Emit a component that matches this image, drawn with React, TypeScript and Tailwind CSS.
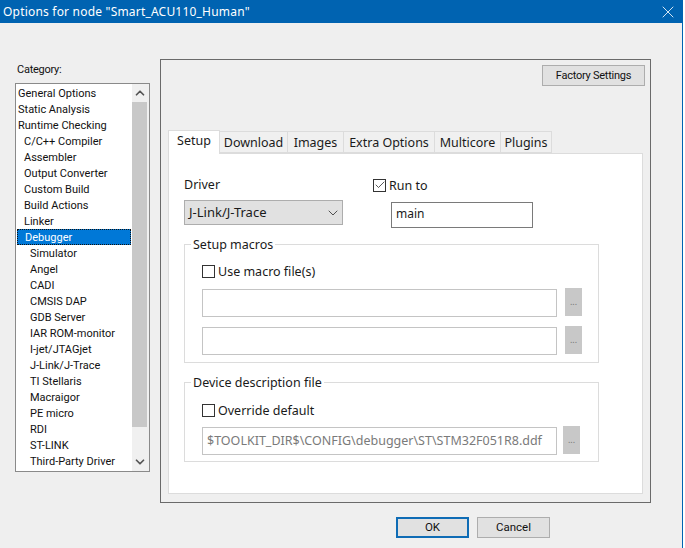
import type { ReactNode } from "react";
import { ChevronDown, ChevronUp, Check, X } from "lucide-react";

const categories = [
  { name: "General Options", indent: 0 },
  { name: "Static Analysis", indent: 0 },
  { name: "Runtime Checking", indent: 0 },
  { name: "C/C++ Compiler", indent: 1 },
  { name: "Assembler", indent: 1 },
  { name: "Output Converter", indent: 1 },
  { name: "Custom Build", indent: 1 },
  { name: "Build Actions", indent: 1 },
  { name: "Linker", indent: 1 },
  { name: "Debugger", indent: 1, active: true },
  { name: "Simulator", indent: 2 },
  { name: "Angel", indent: 2 },
  { name: "CADI", indent: 2 },
  { name: "CMSIS DAP", indent: 2 },
  { name: "GDB Server", indent: 2 },
  { name: "IAR ROM-monitor", indent: 2 },
  { name: "I-jet/JTAGjet", indent: 2 },
  { name: "J-Link/J-Trace", indent: 2 },
  { name: "TI Stellaris", indent: 2 },
  { name: "Macraigor", indent: 2 },
  { name: "PE micro", indent: 2 },
  { name: "RDI", indent: 2 },
  { name: "ST-LINK", indent: 2 },
  { name: "Third-Party Driver", indent: 2 },
];

const tabs = [
  { name: "Download", width: "w-[68px]" },
  { name: "Images", width: "w-[56px]" },
  { name: "Extra Options", width: "w-[91px]" },
  { name: "Multicore", width: "w-[66px]" },
  { name: "Plugins", width: "w-[51px]" },
];

function CheckBox({ checked, label }: { checked?: boolean; label: string }) {
  return (
    <div className="flex h-[14px] items-center gap-[3px] text-[12.5px] leading-[14px] text-[#1a1a1a]">
      <span className="flex h-[13px] w-[13px] items-center justify-center border border-[#333] bg-white">
        {checked && <Check size={12} strokeWidth={1.5} className="shrink-0 text-[#222]" />}
      </span>
      <span className="pt-[2px]">{label}</span>
    </div>
  );
}

function PathRow({ text, buttonClass }: { text?: string; buttonClass: string }) {
  return (
    <div className="flex items-center">
      <div className="flex h-[28px] w-[355px] items-center border border-[#c4c4c4] bg-white pl-[4px] text-[12.5px] text-[#7a7a7a]">
        {text}
      </div>
      <div className={`mb-[2px] flex h-[28px] w-[17px] items-center justify-center bg-[#c8c8c8] text-[9px] text-[#777] ${buttonClass}`}>
        ...
      </div>
    </div>
  );
}

function GroupBox({ title, children }: { title: string; children: ReactNode }) {
  return (
    <div className="relative border border-[#dcdcdc] pl-[17px]">
      <span className="absolute left-[6px] top-[-9px] bg-white px-[2px] text-[12.5px] leading-[17px] text-[#1a1a1a]">
        {title}
      </span>
      {children}
    </div>
  );
}

export default function App() {
  return (
    <div className="flex h-[548px] w-[685px] flex-col overflow-hidden bg-white font-['Noto_Sans',sans-serif]">
      <div className="flex h-[23px] w-[683px] shrink-0 items-center justify-between bg-[#0063b1] pl-[3px] pr-[5px] text-[12px] tracking-[0.2px] text-white">
        <span>Options for node "Smart_ACU110_Human"</span>
        <X size={20} strokeWidth={1} />
      </div>

      <div className="flex h-[525px] w-[683px] flex-col border-r border-[#0063b1] bg-[#efefef]">
        <div className="flex items-start pl-[15px] pt-[36px]">
          <div className="mt-[2px] w-[135px]">
            <div className="pl-[2px] font-['Roboto',sans-serif] text-[11px] leading-[18px] tracking-[-0.25px] text-[#111]">Category:</div>
            <div className="mt-[4px] flex h-[389px] border border-[#8a8a8a] bg-white font-['Roboto',sans-serif] text-[11px] text-[#111]">
              <div className="flex-1 pl-[1px] pt-[1px]">
                {categories.map((c) => (
                  <div
                    key={c.name}
                    className={`${c.indent === 0 ? "pl-px" : c.indent === 1 ? "pl-[7px]" : "pl-[13px]"} ${
                      c.active
                        ? "mr-[1px] h-[16px] border border-dotted border-[#111] bg-[#0078d7] pl-[5px] leading-[16px] text-white"
                        : "h-[16px] leading-[18px]"
                    }`}
                  >
                    {c.name}
                  </div>
                ))}
              </div>
              <div className="flex w-[17px] flex-col bg-[#f0f0f0]">
                <div className="flex h-[18px] w-[15px] items-center justify-center">
                  <ChevronUp size={14} strokeWidth={3} className="text-[#555]" />
                </div>
                <div className="h-[325px] w-[15px] bg-[#c8c8c8]" />
                <div className="flex flex-1 w-[15px] items-end justify-center pb-[2px]">
                  <ChevronDown size={14} strokeWidth={3} className="text-[#555]" />
                </div>
              </div>
            </div>
          </div>

          <div className="ml-[10px] flex h-[444px] w-[491px] flex-col border border-[#6a6a6a] px-[7px]">
            <div className="mr-[-2px] flex justify-end pt-[5px]">
              <div className="flex h-[21px] w-[103px] items-center justify-center border border-[#adadad] bg-[#e1e1e1] pt-[2px] font-['Roboto',sans-serif] text-[11px] tracking-[-0.25px] text-[#111]">
                Factory Settings
              </div>
            </div>
            <div className="mt-[44px] flex h-[23px] items-end">
              <div className="z-10 mb-[-1px] flex h-[24px] w-[52px] items-center justify-center border border-b-0 border-[#dcdcdc] bg-white pb-[3px] text-[12.5px] text-[#1a1a1a]">
                Setup
              </div>
              {tabs.map((tab) => (
                <div
                  key={tab.name}
                  className={`flex h-[22px] items-center justify-center border-y border-r border-[#dcdcdc] bg-[#f0f0f0] pt-[3px] text-[12.5px] text-[#1a1a1a] ${tab.width}`}
                >
                  {tab.name}
                </div>
              ))}
            </div>
            <div className="h-[341px] border border-[#dcdcdc] bg-white pl-[15px] pr-[43px]">
              <div className="flex pt-[20px]">
                <div className="w-[159px]">
                  <div className="text-[12.5px] leading-[22px] text-[#1a1a1a]">Driver</div>
                  <div className="mt-[4px] flex h-[25px] items-center justify-between border border-[#adadad] bg-[#e1e1e1] pl-[4px] pr-[1px] text-[13px] text-[#1a1a1a]">
                    J-Link/J-Trace
                    <ChevronDown size={16} strokeWidth={1.25} className="text-[#333]" />
                  </div>
                </div>
                <div className="ml-[30px] pt-[4px]">
                  <CheckBox checked label="Run to" />
                  <div className="ml-[18px] mt-[10px] flex h-[26px] w-[142px] items-center border border-[#7a7a7a] bg-white pb-[2px] pl-[4px] text-[12px] text-[#1a1a1a]">
                    main
                  </div>
                </div>
              </div>

              <div className="mt-[16px]">
                <GroupBox title="Setup macros">
                  <div className="h-[117px] pt-[19px]">
                    <CheckBox label="Use macro file(s)" />
                    <div className="mt-[10px] flex flex-col gap-[8px]">
                      <PathRow buttonClass="ml-[8px]" />
                      <PathRow buttonClass="ml-[8px]" />
                    </div>
                  </div>
                </GroupBox>
              </div>

              <div className="mt-[19px]">
                <GroupBox title="Device description file">
                  <div className="h-[78px] pt-[20px]">
                    <CheckBox label="Override default" />
                    <div className="mt-[9px]">
                      <PathRow text="$TOOLKIT_DIR$\CONFIG\debugger\ST\STM32F051R8.ddf" buttonClass="ml-[6px]" />
                    </div>
                  </div>
                </GroupBox>
              </div>
            </div>
          </div>
        </div>

        <div className="mt-[14px] flex gap-[8px] pl-[396px] font-['Roboto',sans-serif] text-[11.5px] text-[#111]">
          <div className="flex h-[21px] w-[73px] items-center justify-center border-2 border-[#0f6cb5] bg-[#e1e1e1]">OK</div>
          <div className="flex h-[21px] w-[73px] items-center justify-center border border-[#adadad] bg-[#e1e1e1]">Cancel</div>
        </div>
      </div>
    </div>
  );
}
